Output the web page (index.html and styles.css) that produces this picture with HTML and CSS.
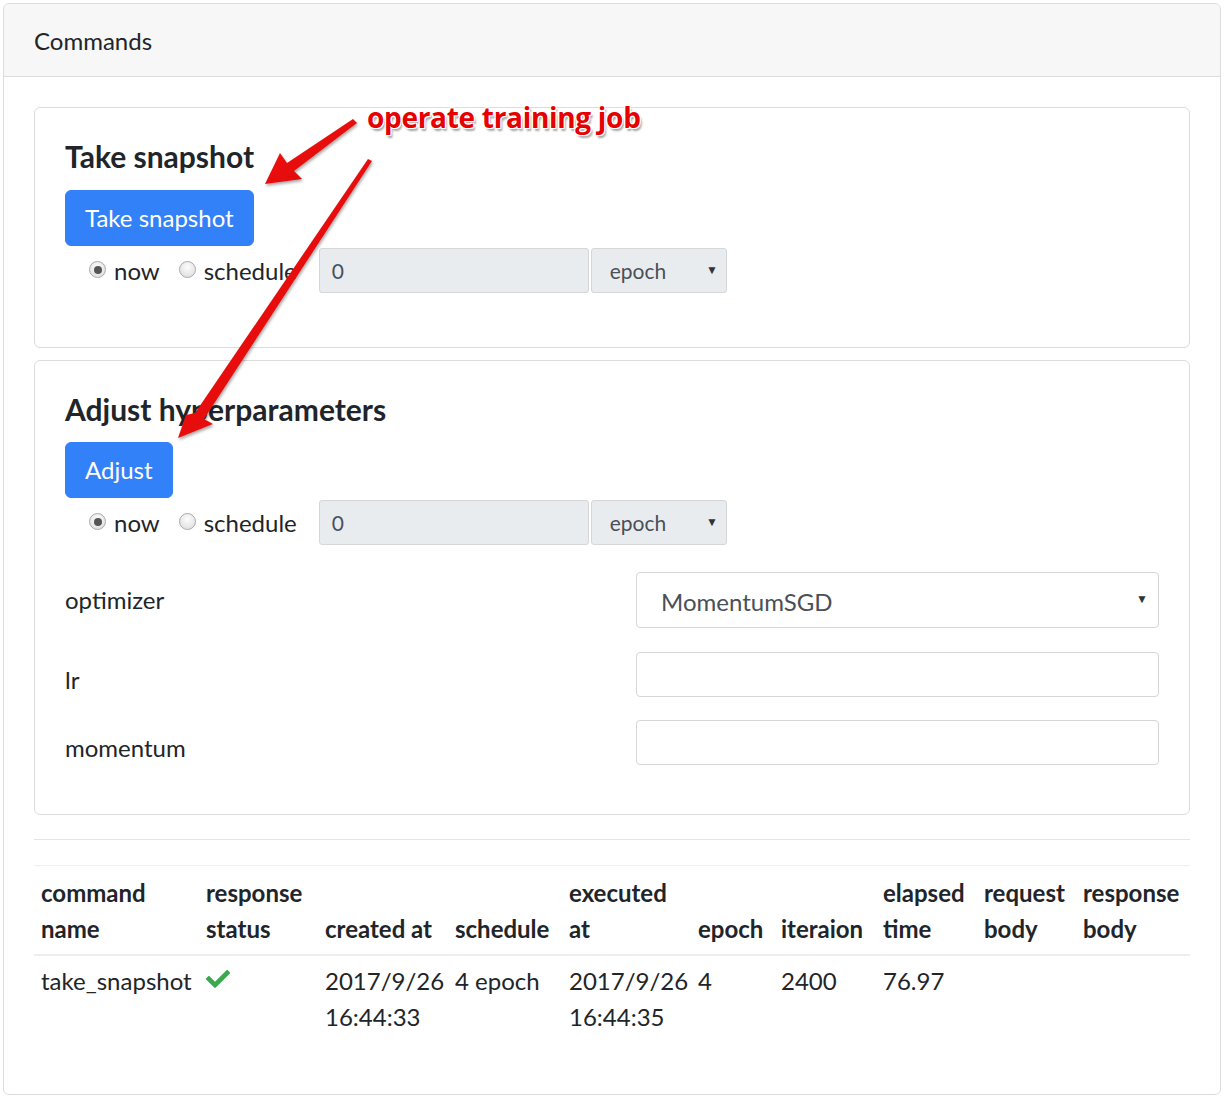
FILE: index.html
```html
<!DOCTYPE html>
<html>
<head>
<meta charset="utf-8">
<link rel="stylesheet" href="styles.css">
</head>
<body>
<div class="card outer">
  <div class="card-header">Commands</div>
  <div class="card-body">
    <div class="card inner">
      <h5 class="card-title">Take snapshot</h5>
      <button class="btn">Take snapshot</button>
      <div class="sched-row">
        <label class="radio-item"><span class="radio checked"></span>now</label>
        <label class="radio-item"><span class="radio"></span>schedule</label>
        <div class="sm-input">0</div>
        <div class="sm-select">epoch<span class="caret">&#9660;</span></div>
      </div>
    </div>
    <div class="card inner second">
      <h5 class="card-title">Adjust hyperparameters</h5>
      <button class="btn">Adjust</button>
      <div class="sched-row">
        <label class="radio-item"><span class="radio checked"></span>now</label>
        <label class="radio-item"><span class="radio"></span>schedule</label>
        <div class="sm-input">0</div>
        <div class="sm-select">epoch<span class="caret">&#9660;</span></div>
      </div>
      <div class="form-row opt">
        <div class="form-label">optimizer</div>
        <div class="big-select">MomentumSGD<span class="caret">&#9660;</span></div>
      </div>
      <div class="form-row lr">
        <div class="form-label">lr</div>
        <div class="text-input"></div>
      </div>
      <div class="form-row mom">
        <div class="form-label">momentum</div>
        <div class="text-input"></div>
      </div>
    </div>
    <hr class="sep">
    <table class="cmd-table">
      <colgroup>
        <col style="width:165px"><col style="width:119px"><col style="width:130px"><col style="width:114px"><col style="width:129px"><col style="width:83px"><col style="width:102px"><col style="width:101px"><col style="width:99px"><col style="width:114px">
      </colgroup>
      <thead>
        <tr>
          <th>command<br>name</th>
          <th>response<br>status</th>
          <th>created at</th>
          <th>schedule</th>
          <th>executed<br>at</th>
          <th>epoch</th>
          <th>iteraion</th>
          <th>elapsed<br>time</th>
          <th>request<br>body</th>
          <th>response<br>body</th>
        </tr>
      </thead>
      <tbody>
        <tr>
          <td>take_snapshot</td>
          <td><svg class="check" viewBox="0 0 512 512" width="24" height="24"><path d="M173.9 439.4L7.5 273c-10-10-10-26.2 0-36.2l36.2-36.2c10-10 26.2-10 36.2 0L192 312.7 432.1 72.6c10-10 26.2-10 36.2 0l36.2 36.2c10 10 10 26.2 0 36.2L210.1 439.4c-10 10-26.2 10-36.2 0z"/></svg></td>
          <td>2017/9/26<br>16:44:33</td>
          <td>4 epoch</td>
          <td>2017/9/26<br>16:44:35</td>
          <td>4</td>
          <td>2400</td>
          <td>76.97</td>
          <td></td>
          <td></td>
        </tr>
      </tbody>
    </table>
  </div>
</div>

<div class="annotation">operate training job</div>
<svg class="arrows" width="1224" height="1098" viewBox="0 0 1224 1098">
  <defs>
    <linearGradient id="ag" x1="0" y1="0" x2="1" y2="1">
      <stop offset="0" stop-color="#ff1a1a"/>
      <stop offset="1" stop-color="#d00000"/>
    </linearGradient>
    <filter id="sh" x="-20%" y="-20%" width="140%" height="140%">
      <feDropShadow dx="1" dy="2" stdDeviation="1.5" flood-color="#000" flood-opacity="0.35"/>
    </filter>
  </defs>
  <polygon filter="url(#sh)" fill="url(#ag)" points="265,184 280,153 287,163 353,119 357,123 294,171 302,179"/>
  <polygon filter="url(#sh)" fill="url(#ag)" points="178,438 186,415 195,413 368,159 372,161 204,419 213,424"/>
</svg>
</body>
</html>
```
FILE: styles.css
```css
* { box-sizing: border-box; }
html, body { background: #fff; }
body {
  margin: 3px;
  font-family: Lato, "Open Sans", sans-serif;
  font-size: 24px;
  line-height: 36px;
  color: #212529;
  position: relative;
}
.card {
  border: 1px solid #dcdcdc;
  border-radius: 6px;
  background: #fff;
}
.outer { width: 1218px; height: 1092px; }
.card-header {
  background: #f7f7f7;
  border-bottom: 1px solid #dcdcdc;
  padding: 19px 30px 17px;
  border-radius: 6px 6px 0 0;
}
.card-body { padding: 30px 30px; }
.inner { padding: 30px 30px 30px; }
.inner.second { margin-top: 12px; }
.card-title {
  margin: 0 0 16px;
  font-size: 30px;
  line-height: 36px;
  font-weight: 700;
  color: #212529;
}
.second .card-title { margin-bottom: 15px; }
.btn {
  display: block;
  font-family: inherit;
  font-size: 24px;
  line-height: 36px;
  height: 56px;
  color: #fff;
  background: #3381f8;
  border: 1px solid #3381f8;
  border-radius: 6px;
  padding: 9px 19px;
}
.sched-row {
  display: flex;
  align-items: center;
  margin-top: 2px;
  margin-bottom: 24px;
  padding-left: 24px;
}
.second .sched-row { margin-bottom: 27px; }
.radio-item {
  display: flex;
  align-items: center;
  margin-right: 19px;
}
.radio {
  width: 17px;
  height: 17px;
  border-radius: 50%;
  border: 1px solid #a9a9a9;
  background: radial-gradient(circle at 50% 35%, #fdfdfd 0, #e4e4e4 70%);
  margin-right: 8px;
  position: relative;
  top: -1px;
}
.radio.checked::after {
  content: "";
  position: absolute;
  left: 3.5px;
  top: 3.5px;
  width: 8px;
  height: 8px;
  border-radius: 50%;
  background: #555;
}
.sm-input, .sm-select {
  height: 45px;
  background: #e9ecef;
  border: 1px solid #d4d6d8;
  border-radius: 3px;
  font-size: 21px;
  line-height: 31px;
  color: #495057;
  padding: 6px 12px;
}
.sm-input { width: 270px; margin-left: 3px; }
.sm-select {
  width: 136px;
  margin-left: 2px;
  padding-left: 18px;
  position: relative;
}
.caret {
  position: absolute;
  right: 8px;
  top: 0;
  font-size: 12px;
  color: #333;
}
.sm-select .caret { top: 0; line-height: 42px; }
.form-row {
  display: flex;
  align-items: flex-start;
}
.form-label {
  width: 571px;
  padding-top: 10px;
  line-height: 36px;
}
.big-select, .text-input {
  width: 523px;
  border: 1px solid #d4d6d8;
  border-radius: 4px;
  background: #fff;
}
.big-select {
  height: 56px;
  padding: 11px 24px 7px;
  color: #495057;
  position: relative;
}
.big-select .caret { line-height: 52px; right: 10px; }
.text-input { height: 45px; }
.opt { margin-bottom: 24px; }
.lr { margin-bottom: 22px; }
.mom { margin-bottom: 18px; }
.sep {
  margin: 24px 0 25px;
  border: 0;
  border-top: 1px solid #e5e5e5;
  height: 0;
}
.cmd-table {
  width: 1156px;
  table-layout: fixed;
  border-collapse: collapse;
  border-top: 1px solid #eceeef;
}
.cmd-table th, .cmd-table td {
  padding: 7px 7px;
  text-align: left;
  white-space: nowrap;
  overflow: visible;
}
.cmd-table th {
  padding-top: 9px;
  vertical-align: bottom;
  font-weight: 700;
  border-bottom: 2px solid #eceeef;
}
.cmd-table td { vertical-align: top; }
.check {
  fill: #3aa84d;
  display: block;
  margin-top: 4px;
}
.annotation {
  position: absolute;
  left: 364px;
  top: 100px;
  font-family: "Open Sans", sans-serif;
  font-weight: 700;
  font-size: 28px;
  line-height: 28px;
  color: #e60000;
  letter-spacing: -0.3px;
  text-shadow: 0 0 1px #fff, 0 0 2px #fff, 1px 1px 0 #fff, -1px -1px 0 #fff, 1px -1px 0 #fff, -1px 1px 0 #fff, 2px 3px 2px rgba(0,0,0,0.35);
}
.arrows {
  position: absolute;
  left: -3px;
  top: -3px;
  pointer-events: none;
}
```
